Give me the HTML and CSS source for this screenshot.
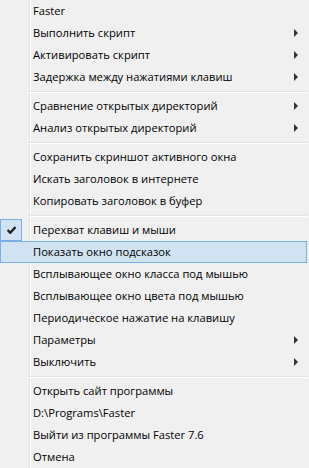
FILE: index.html
```html
<!DOCTYPE html>
<html lang="ru">
<head>
    <meta charset="UTF-8">
    <title>Faster</title>
    <link rel="stylesheet" href="styles.css">
</head>
<body>
    <div class="menu">
        <div class="item"><span class="mark"></span><span class="label">Faster</span></div>
        <div class="item"><span class="mark"></span><span class="label">Выполнить скрипт</span><span class="arrow"></span></div>
        <div class="item"><span class="mark"></span><span class="label">Активировать скрипт</span><span class="arrow"></span></div>
        <div class="item"><span class="mark"></span><span class="label">Задержка между нажатиями клавиш</span><span class="arrow"></span></div>
        <div class="separator"></div>
        <div class="item"><span class="mark"></span><span class="label">Сравнение открытых директорий</span><span class="arrow"></span></div>
        <div class="item"><span class="mark"></span><span class="label">Анализ открытых директорий</span><span class="arrow"></span></div>
        <div class="separator"></div>
        <div class="item"><span class="mark"></span><span class="label">Сохранить скриншот активного окна</span></div>
        <div class="item"><span class="mark"></span><span class="label">Искать заголовок в интернете</span></div>
        <div class="item"><span class="mark"></span><span class="label">Копировать заголовок в буфер</span></div>
        <div class="separator"></div>
        <div class="item">
            <span class="mark checked">
                <svg width="9" height="8" viewBox="0 0 9 8"><path d="M0.6 4 L3.3 6.8 L8.5 1" fill="none" stroke="#222" stroke-width="2.4"/></svg>
            </span>
            <span class="label">Перехват клавиш и мыши</span>
        </div>
        <div class="item hot"><span class="mark"></span><span class="label">Показать окно подсказок</span></div>
        <div class="item"><span class="mark"></span><span class="label">Всплывающее окно класса под мышью</span></div>
        <div class="item"><span class="mark"></span><span class="label">Всплывающее окно цвета под мышью</span></div>
        <div class="item"><span class="mark"></span><span class="label">Периодическое нажатие на клавишу</span></div>
        <div class="item"><span class="mark"></span><span class="label">Параметры</span><span class="arrow"></span></div>
        <div class="item"><span class="mark"></span><span class="label">Выключить</span><span class="arrow"></span></div>
        <div class="separator"></div>
        <div class="item"><span class="mark"></span><span class="label">Открыть сайт программы</span></div>
        <div class="item"><span class="mark"></span><span class="label">D:\Programs\Faster</span></div>
        <div class="item"><span class="mark"></span><span class="label">Выйти из программы Faster 7.6</span></div>
        <div class="item"><span class="mark"></span><span class="label">Отмена</span></div>
    </div>
</body>
</html>
```

FILE: styles.css
```css
body {
    margin: 0;
    background-color: #f0f0f0;
    font-family: "Open Sans", "Noto Sans", sans-serif;
    font-size: 11.2px;
    color: #000;
}

.menu {
    width: 309px;
    height: 468px;
    display: flex;
    flex-direction: column;
    background:
        linear-gradient(to right, transparent 29px, #e2e3e3 29px, #e2e3e3 30px, #fff 30px, #fff 31px, transparent 31px),
        #f0f0f0;
}

.item {
    display: flex;
    align-items: center;
    height: 22px;
    margin-right: 2px;
    border: 1px solid transparent;
    box-sizing: border-box;
    white-space: nowrap;
}

.item.hot {
    background-color: #d1e2f2;
    border-color: #78aee5;
}

.mark {
    flex: none;
    width: 22px;
    height: 22px;
    margin: -1px 11px -1px -1px;
    box-sizing: border-box;
    display: flex;
    align-items: center;
    justify-content: center;
}

.mark.checked {
    background-color: #d1e2f2;
    border: 1px solid #78aee5;
}

.label {
    line-height: 20px;
}

.arrow {
    margin-left: auto;
    margin-right: 8px;
    width: 0;
    height: 0;
    border-left: 4px solid #333;
    border-top: 4px solid transparent;
    border-bottom: 4px solid transparent;
}

.separator {
    height: 7px;
    margin-left: 29px;
    margin-right: 2px;
    background:
        linear-gradient(to bottom, transparent 3px, #e2e3e3 3px, #e2e3e3 4px, #fff 4px, #fff 5px, transparent 5px);
}
```
